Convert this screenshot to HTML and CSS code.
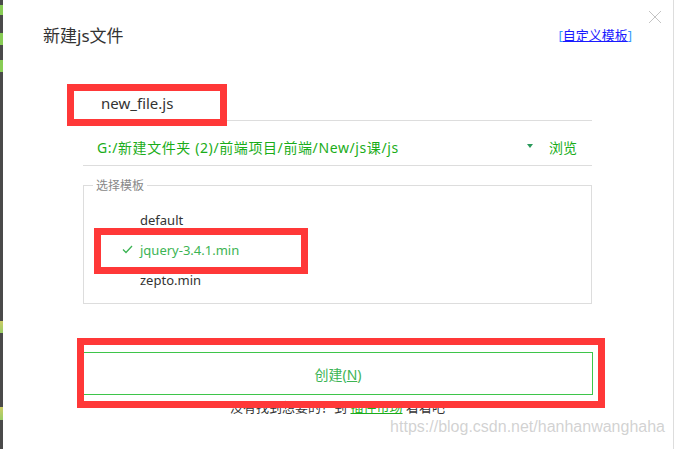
FILE: index.html
```html
<!DOCTYPE html>
<html>
<head>
    <title>新建js文件</title>
    <link rel="stylesheet" href="styles.css">
</head>
<body>
    <div class="dialog">
        <div class="edge"></div>

        <div class="header">
            <h1 class="title">新建js文件</h1>
            <a class="custom-link" href="#"><span class="bracket">[</span><u>自定义模板</u><span class="bracket">]</span></a>
        </div>
        <svg class="close" width="14" height="14" viewBox="0 0 14 14">
            <path d="M1 1 L13 13 M13 1 L1 13" stroke="#c4c4c4" stroke-width="1" fill="none" />
        </svg>

        <div class="form">
            <div class="name-row">new_file.js</div>
            <div class="path-row">
                <span class="path">G:/新建文件夹 (2)/前端项目/前端/New/js课/js</span>
                <span class="arrow"></span>
                <span class="browse">浏览</span>
            </div>

            <fieldset class="templates">
                <legend>选择模板</legend>
                <ul class="template-list">
                    <li>default</li>
                    <li class="selected">
                        <svg class="check" width="11" height="9" viewBox="0 0 11 9">
                            <path d="M1 4.5 L4 7.5 L10 1" stroke="#3cb454" stroke-width="1.3" fill="none" />
                        </svg>jquery-3.4.1.min
                    </li>
                    <li>zepto.min</li>
                </ul>
            </fieldset>

            <button type="button" class="create-button">创建(<u>N</u>)</button>
            <p class="hint">没有找到想要的？到 <a href="#">插件市场</a> 看看吧</p>
        </div>

        <!-- 标注框 -->
        <div class="mark mark-name"></div>
        <div class="mark mark-jquery"></div>
        <div class="mark mark-button"></div>

        <div class="watermark">https://blog.csdn.net/hanhanwanghaha</div>
    </div>
</body>
</html>
```

FILE: styles.css
```css
body {
    margin: 0;
    font-family: "Noto Sans", "Noto Sans CJK SC", sans-serif;
    color: #333;
}

.dialog {
    position: relative;
    width: 674px;
    height: 449px;
    box-sizing: border-box;
    border-right: 1px solid #ddd;
    background: #fff;
    overflow: hidden;
}

.edge {
    position: absolute;
    left: 0;
    top: 0;
    width: 3px;
    height: 100%;
    background: linear-gradient(#4a4a4a 0, #4a4a4a 5px, #8c5 5px, #8c5 15px, #4a4a4a 15px,
        #4a4a4a 33px, #8c5 33px, #8c5 45px, #4a4a4a 45px,
        #4a4a4a 60px, #8c5 60px, #8c5 72px, #4a4a4a 72px,
        #4a4a4a 321px, #cc6 321px, #9c6 333px, #4a4a4a 333px,
        #4a4a4a 407px, #cc6 407px, #9c6 420px, #4a4a4a 420px);
}

.header {
    display: flex;
    justify-content: space-between;
    align-items: center;
    padding: 24px 41px 0 43px;
    height: 24px;
}

.title {
    margin: 0;
    font-size: 17px;
    font-weight: normal;
    line-height: 24px;
    color: #333;
}

.custom-link {
    font-size: 13px;
    color: #1a1aff;
    text-decoration: none;
    margin-top: -4px;
}

.custom-link .bracket {
    color: #39f;
}

.close {
    position: absolute;
    top: 10px;
    left: 648px;
}

.form {
    margin: 38px 0 0 83px;
    width: 509px;
}

.name-row {
    height: 34px;
    line-height: 34px;
    padding-left: 18px;
    font-size: 15px;
    border-bottom: 1px solid #ddd;
}

.path-row {
    display: flex;
    align-items: center;
    height: 44px;
    padding: 0 15px 0 14px;
    font-size: 14px;
    color: #1aad19;
    border-bottom: 1px solid #ddd;
}

.path {
    flex: 1;
    padding-top: 8px;
    letter-spacing: 0.6px;
}

.arrow {
    width: 0;
    height: 0;
    margin: 6px 16px 0 0;
    border-left: 3px solid transparent;
    border-right: 3px solid transparent;
    border-top: 4px solid #2a9a5a;
}

.browse {
    padding-top: 8px;
}

.templates {
    margin: 10px 0 0;
    padding: 11px 0 11px;
    height: 104px;
    border: 1px solid #ddd;
}

.templates legend {
    margin-left: 9px;
    padding: 0 3px;
    font-size: 12px;
    color: #888;
}

.template-list {
    list-style: none;
    margin: 0;
    padding: 0 0 0 56px;
    font-size: 13px;
}

.template-list li {
    position: relative;
    height: 30px;
    line-height: 30px;
}

.template-list .selected {
    color: #3cb454;
}

.check {
    position: absolute;
    left: -18px;
    top: 10px;
}

.create-button {
    display: block;
    margin-top: 48px;
    width: 510px;
    height: 43px;
    background: #fff;
    border: 1px solid #3ec54a;
    color: #3cb454;
    font-family: inherit;
    font-size: 14px;
    padding: 0;
}

.hint {
    margin: 2px 0 0;
    text-align: center;
    font-size: 13px;
    line-height: 20px;
    color: #333;
}

.hint a {
    color: #1aad19;
}

.mark {
    position: absolute;
    border: 7px solid #ff3838;
}

.mark-name {
    left: 67px;
    top: 84px;
    width: 146px;
    height: 28px;
}

.mark-jquery {
    left: 94px;
    top: 228px;
    width: 200px;
    height: 32px;
}

.mark-button {
    left: 77px;
    top: 338px;
    width: 514px;
    height: 56px;
}

.watermark {
    position: absolute;
    right: 8px;
    top: 418px;
    font-family: "Liberation Sans", sans-serif;
    font-size: 16px;
    color: rgba(180, 180, 180, 0.6);
}
```
